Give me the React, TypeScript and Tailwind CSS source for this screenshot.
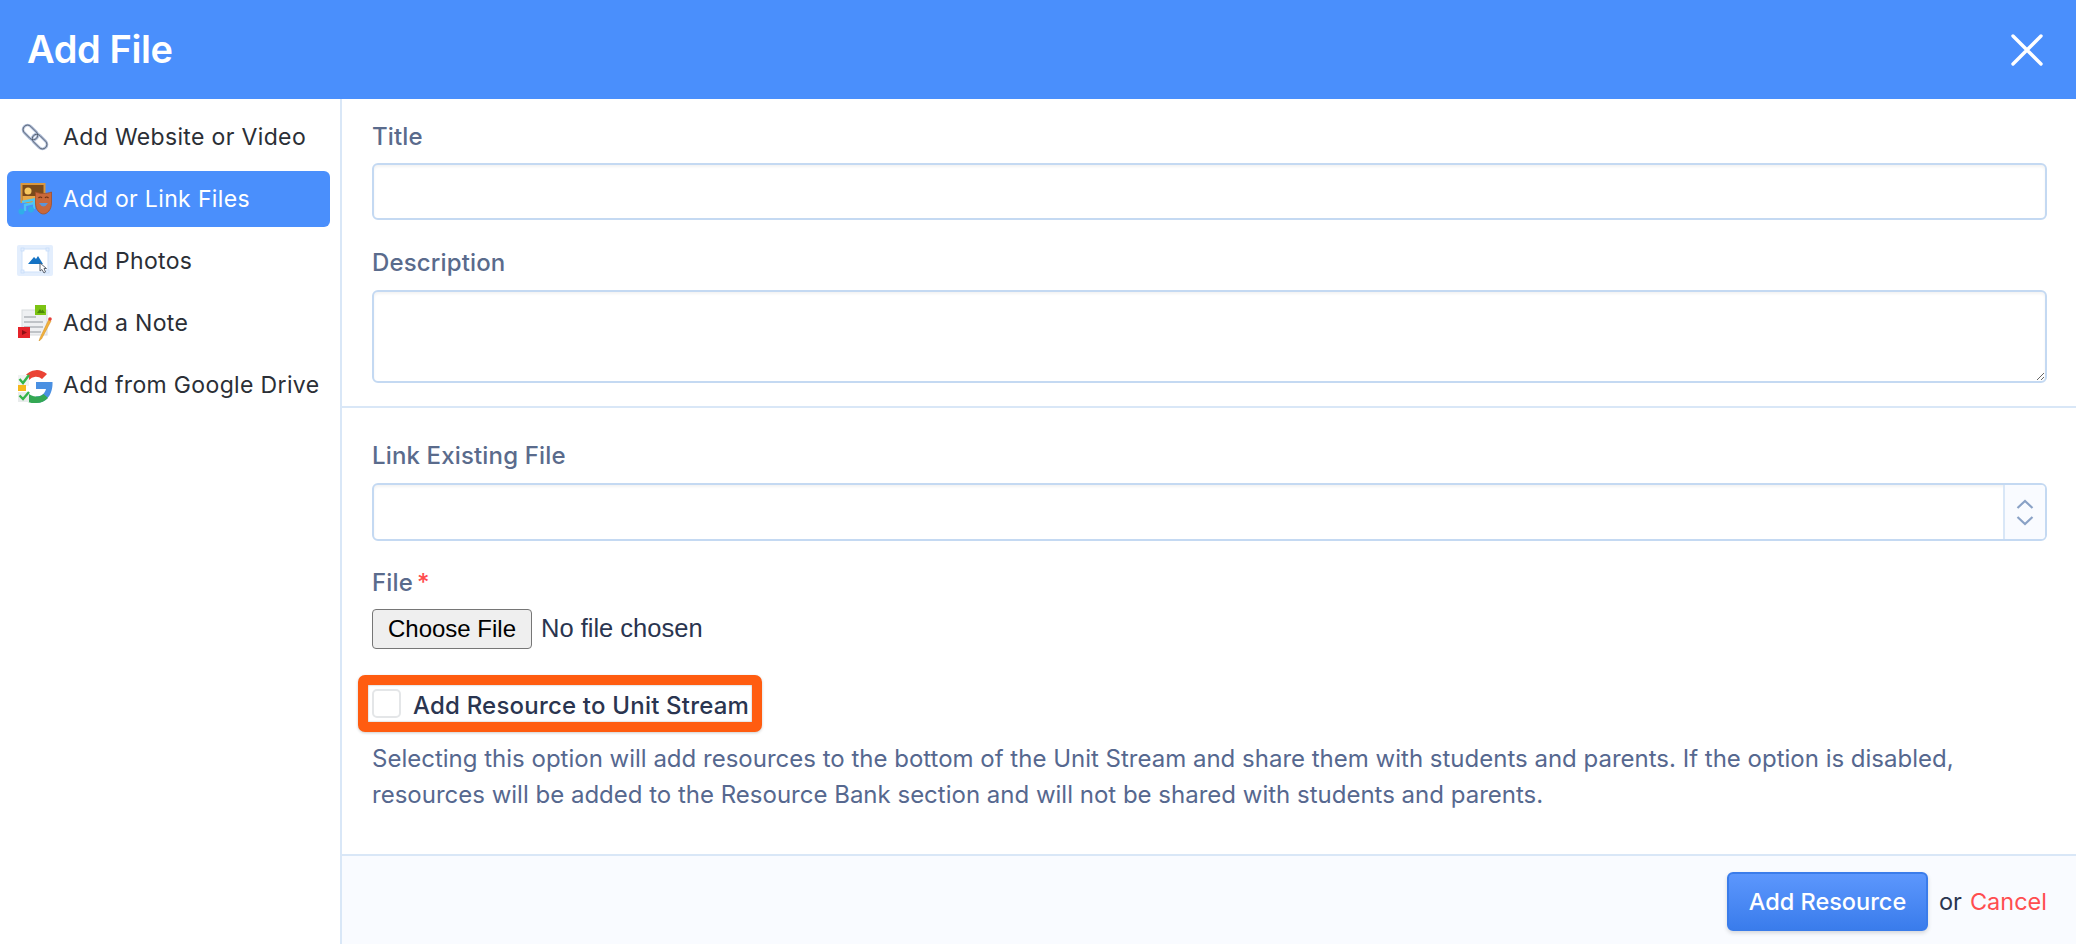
import React from 'react';

const LinkIcon = () => (
  <svg width="36" height="36" viewBox="0 0 36 36" fill="none">
    <g transform="rotate(45 18 18)">
      <rect x="3" y="13.500" width="17" height="9" rx="4.500" stroke="#aebcd6" strokeWidth="2.800" />
      <rect x="16" y="13.500" width="17" height="9" rx="4.500" stroke="#aebcd6" strokeWidth="2.800" />
      <rect x="3" y="13.500" width="17" height="9" rx="4.500" stroke="#4b5563" strokeWidth="0.800" />
      <rect x="16" y="13.500" width="17" height="9" rx="4.500" stroke="#4b5563" strokeWidth="0.800" />
    </g>
  </svg>
);

const FilesIcon = () => (
  <svg width="36" height="32" viewBox="0 0 36 32" fill="none">
    <rect x="4.500" y="1" width="23" height="18" fill="#7a4a1c" stroke="#d9973f" strokeWidth="2" />
    <circle cx="11" cy="8" r="3.500" fill="#f7c860" />
    <rect x="5.500" y="13" width="21" height="5" fill="#e8a948" />
    <path d="M5 19 L17 16.500 V20 L8 22 V28" stroke="#4ec6f2" strokeWidth="2.400" />
    <path d="M17 18 V26" stroke="#4ec6f2" strokeWidth="2" />
    <circle cx="4.500" cy="28.500" r="3" fill="#30aee8" />
    <circle cx="14" cy="26.500" r="3" fill="#30aee8" />
    <path d="M18.500 9 C24 11 29 11 34.500 9 V20 C34.500 27 30 31 26.500 31 C23 31 18.500 27 18.500 20 Z" fill="#c9683a" stroke="#a34e24" strokeWidth="0.800" />
    <path d="M21.500 15 Q23.500 13 25 15 M28 15 Q29.500 13 31.500 15" stroke="#6b3014" strokeWidth="1.200" />
    <path d="M22 20 Q26.500 27 31 20 Z" fill="#5c95d8" />
  </svg>
);

const PhotoIcon = () => (
  <svg width="36" height="32" viewBox="0 0 36 32" fill="none">
    <rect x="0" y="0" width="36" height="31" rx="2" fill="#e3eefd" />
    <rect x="5" y="4" width="26" height="23" fill="#ffffff" stroke="#cfe1fa" />
    <rect x="4" y="3" width="3" height="3" fill="#e3eefd" stroke="#c4daf8" strokeWidth="0.700" />
    <rect x="29" y="3" width="3" height="3" fill="#e3eefd" stroke="#c4daf8" strokeWidth="0.700" />
    <rect x="4" y="25" width="3" height="3" fill="#e3eefd" stroke="#c4daf8" strokeWidth="0.700" />
    <rect x="29" y="25" width="3" height="3" fill="#e3eefd" stroke="#c4daf8" strokeWidth="0.700" />
    <path d="M11 19 L17 12 L19 14 L21 11 L26 19 Z" fill="#1573c4" />
    <path d="M23 18 L23 26 L25 24.500 L27 28 L28.500 27 L27 23.500 L29.500 23.500 Z" fill="#ffffff" stroke="#4b5563" strokeWidth="0.900" />
  </svg>
);

const NoteIcon = () => (
  <svg width="36" height="36" viewBox="0 0 36 36" fill="none">
    <rect x="5" y="5" width="25" height="25" fill="#eef0f2" stroke="#d8dbde" />
    <path d="M7 12 H19 M7 17 H26 M7 22 H26 M13 27 H24" stroke="#8f959b" strokeWidth="1.200" />
    <rect x="18" y="0" width="11" height="10" fill="#7cc313" />
    <path d="M20 8 L23 4 L24.500 6 L25.500 4.500 L28 8 Z" fill="#4c8a08" />
    <rect x="1" y="22" width="12" height="11" fill="#e5232a" />
    <path d="M5 25 L10 27.500 L5 30 Z" fill="#8f0f14" />
    <path d="M32 14 L23 33 L22 36 L24.500 34 L34 16 Z" fill="#f3b23c" stroke="#cf8b1d" strokeWidth="0.500" />
    <circle cx="33" cy="14" r="1.800" fill="#e5403a" />
  </svg>
);

const GoogleIcon = () => (
  <svg width="36" height="36" viewBox="0 0 36 36" fill="none">
    <path d="M8 9 A15 15 0 0 1 30 7 L25 12 A9 9 0 0 0 12 13 Z" fill="#ea4335" />
    <path d="M19 15 H35.500 C36 24 32 36 19 36 V29.500 C25 29.500 28 26 29 22 H19 Z" fill="#4a90e2" />
    <path d="M11 35 C13 36 16 36 19 36 C24 36 28 34 31 31 L26.500 27 C24.500 29 22 29.500 19 29.500 C16 29.500 13 28 11 26 Z" fill="#34a853" />
    <rect x="1" y="8" width="11" height="11" fill="#f1f3f3" />
    <path d="M2.500 12 L6 16 L12 8" stroke="#34b54a" strokeWidth="2.400" />
    <rect x="1" y="18" width="8" height="6" fill="#f6b81c" />
    <rect x="1" y="25" width="11" height="10" fill="#e9ecec" />
    <path d="M2.500 28.500 L6 32 L12 25" stroke="#34b54a" strokeWidth="2.400" />
  </svg>
);

const navItems = [
  { label: 'Add Website or Video', icon: <LinkIcon /> },
  { label: 'Add or Link Files', icon: <FilesIcon />, active: true },
  { label: 'Add Photos', icon: <PhotoIcon /> },
  { label: 'Add a Note', icon: <NoteIcon /> },
  { label: 'Add from Google Drive', icon: <GoogleIcon /> },
];

export default function App() {
  return (
    <div className="h-screen flex flex-col bg-white font-['Inter',sans-serif] overflow-hidden">
      <header className="h-[99px] shrink-0 bg-[#4a8ffc] flex items-center justify-between pl-[27px] pr-[32px]">
        <h1 className="text-[38px] font-semibold text-white tracking-[-0.4px]">Add File</h1>
        <svg width="34" height="34" viewBox="0 0 34 34" fill="none" stroke="#ffffff" strokeWidth="3.400" strokeLinecap="round">
          <path d="M3 3 L31 31 M31 3 L3 31" />
        </svg>
      </header>

      <div className="flex-1 flex min-h-0">
        <aside className="w-[342px] shrink-0 border-r-2 border-[#d9e7f7] pl-[7px] pr-[10px] pt-[10px]">
          {navItems.map((item) => (
            <div
              key={item.label}
              className={`h-[56px] mb-[6px] rounded-[6px] flex items-center text-[23px] tracking-[0.35px] ${item.active ? 'bg-[#4a8ffc] text-white' : 'text-[#2b2f36]'}`}
            >
              <span className="w-[56px] shrink-0 flex justify-center">{item.icon}</span>
              <span className="whitespace-nowrap">{item.label}</span>
            </div>
          ))}
        </aside>

        <main className="flex-1 min-w-0 flex flex-col">
          <div className="flex-1 min-h-0">
            <div className="pl-[30px] pr-[29px] pt-[24px] pb-[23px] border-b-2 border-[#d9e7f7]">
              <label className="block text-[24px] leading-[28px] font-medium tracking-[0.15px] text-[#5a6b8c]">Title</label>
              <input className="block mt-[12px] w-full h-[57px] rounded-[6px] border-2 border-[#c4d9f2] bg-white shadow-[inset_0_2px_3px_rgba(0,0,0,0.05)]" />
              <label className="block mt-[29px] text-[24px] leading-[28px] font-medium tracking-[0.15px] text-[#5a6b8c]">Description</label>
              <textarea className="block mt-[13px] w-full h-[93px] rounded-[6px] border-2 border-[#c4d9f2] bg-white shadow-[inset_0_2px_3px_rgba(0,0,0,0.05)]" />
            </div>

            <div className="pl-[30px] pr-[29px] pt-[34px]">
              <label className="block text-[24px] leading-[28px] font-medium tracking-[0.15px] text-[#5a6b8c]">Link Existing File</label>
              <div className="mt-[13px] h-[58px] rounded-[6px] border-2 border-[#c4d9f2] bg-white flex justify-end overflow-hidden shadow-[inset_0_2px_3px_rgba(0,0,0,0.05)]">
                <div className="w-[42px] border-l-2 border-[#d9e7f7] bg-[#f9fbff] flex flex-col items-center justify-center gap-[7px]">
                  <svg width="18" height="10" viewBox="0 0 18 10" fill="none" stroke="#8aa2c6" strokeWidth="2.200">
                    <path d="M1.500 9 L9 2 L16.500 9" />
                  </svg>
                  <svg width="18" height="10" viewBox="0 0 18 10" fill="none" stroke="#8aa2c6" strokeWidth="2.200">
                    <path d="M1.500 1 L9 8 L16.500 1" />
                  </svg>
                </div>
              </div>

              <label className="block mt-[28px] text-[24px] leading-[28px] font-medium tracking-[0.15px] text-[#5a6b8c]">
                File<span className="ml-[4px] text-[#ff4d4f]">*</span>
              </label>
              <input
                type="file"
                className="block mt-[12px] w-[400px] h-[40px] text-[25.500px] text-[#2a3550] font-['Liberation_Sans',sans-serif] file:h-[40px] file:w-[160px] file:mr-[9px] file:rounded-[4px] file:border file:border-solid file:border-[#767676] file:bg-[#efefef] file:text-[#000000] file:text-[24px]"
              />

              <div className="mt-[26px] -ml-[14px] w-[404px] h-[57px] rounded-[7px] border-[10px] border-[#ff5c10] bg-white flex items-center shadow-[0_1px_3px_rgba(0,0,0,0.2),inset_0_0_2px_rgba(0,0,0,0.35)]">
                <span className="ml-[4px] w-[29px] h-[29px] rounded-[5px] border-2 border-[#e4e6e8] bg-white shrink-0" />
                <span className="ml-[12px] pt-[5px] text-[24px] font-medium text-[#2a3550] whitespace-nowrap tracking-[0.2px]">Add Resource to Unit Stream</span>
              </div>

              <p className="mt-[9px] text-[24px] leading-[35.500px] text-[#56688f]">
                Selecting this option will add resources to the bottom of the Unit Stream and share them with students and parents. If the option is disabled, resources will be added to the Resource Bank section and will not be shared with students and parents.
              </p>
            </div>
          </div>

          <footer className="h-[90px] shrink-0 border-t-2 border-[#d9e7f7] bg-[#f9fbff] flex items-center justify-end pr-[29px] pt-[3px]">
            <button className="w-[201px] h-[59px] rounded-[6px] border-2 border-[#3a7cea] bg-gradient-to-b from-[#5c97fd] to-[#3a7cec] text-[23.500px] font-medium text-white shadow-[0_2px_4px_rgba(0,0,0,0.15)]">
              Add Resource
            </button>
            <span className="ml-[11px] text-[23.500px] text-[#2a3550]">or</span>
            <a className="ml-[8px] text-[23.500px] text-[#ff4d4f]">Cancel</a>
          </footer>
        </main>
      </div>
    </div>
  );
}
